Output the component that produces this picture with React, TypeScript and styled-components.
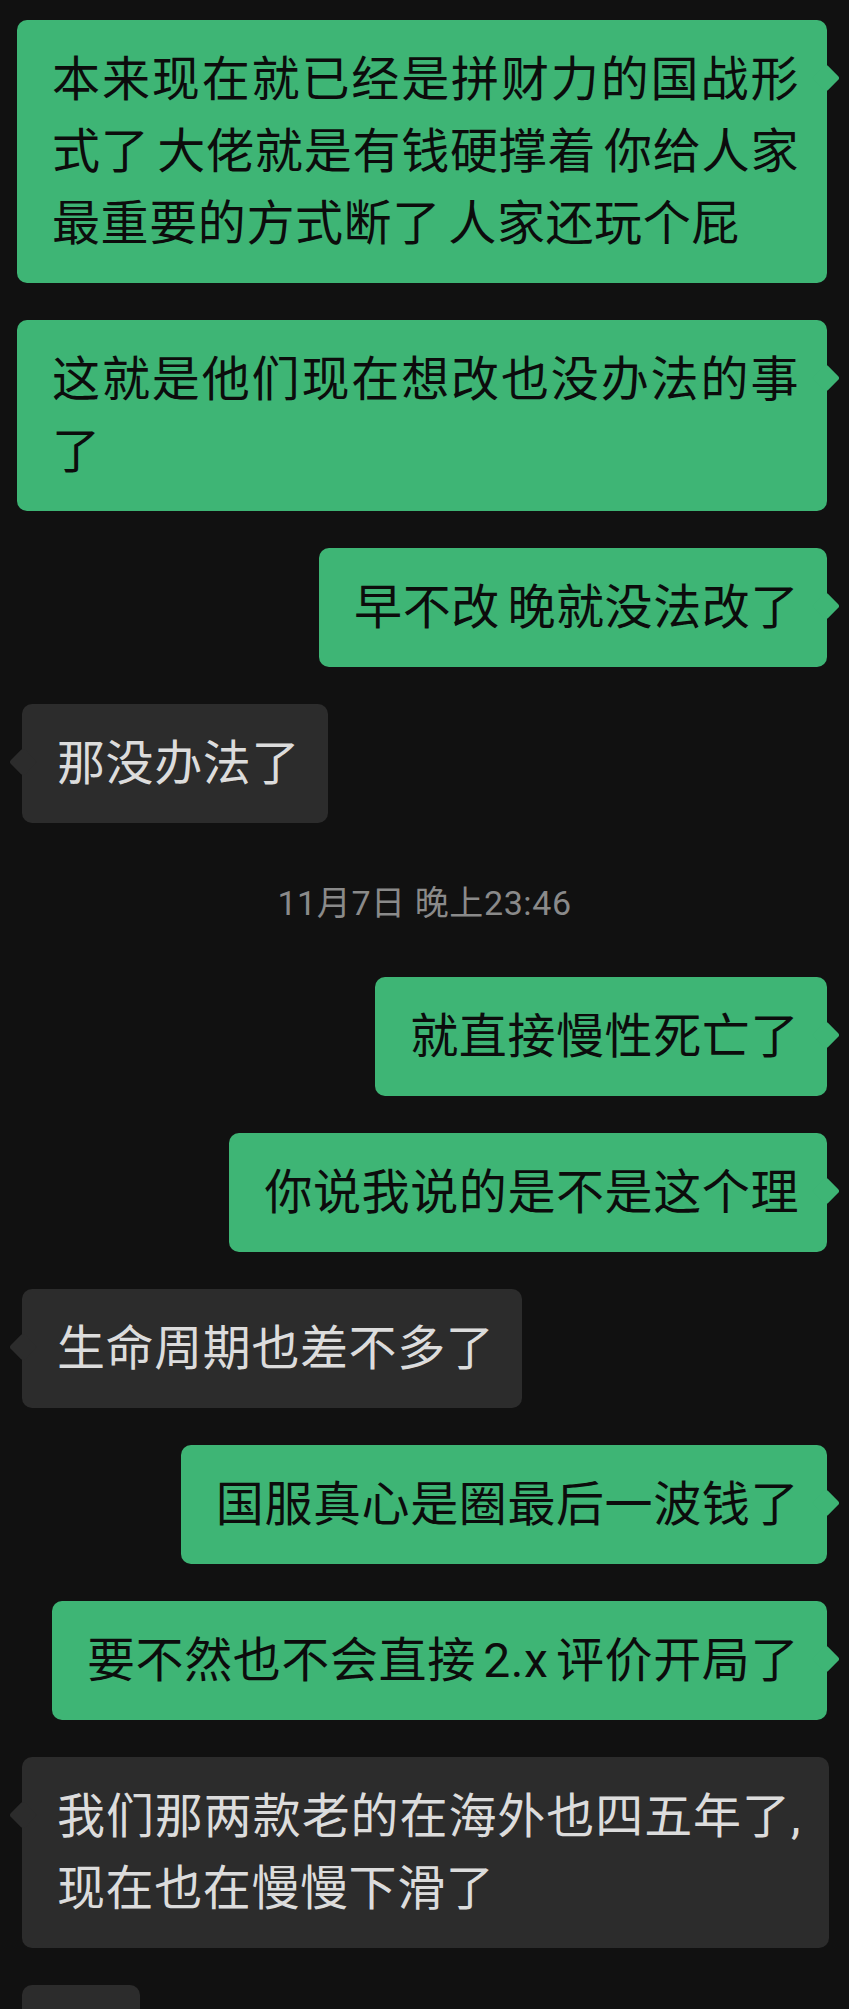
import styled, { createGlobalStyle } from 'styled-components';

type Item =
  | { kind: 'msg'; mine: boolean; text: string }
  | { kind: 'time'; text: string };

const items: Item[] = [
  { kind: 'msg', mine: true, text: '本来现在就已经是拼财力的国战形式了 大佬就是有钱硬撑着 你给人家最重要的方式断了 人家还玩个屁' },
  { kind: 'msg', mine: true, text: '这就是他们现在想改也没办法的事了' },
  { kind: 'msg', mine: true, text: '早不改 晚就没法改了' },
  { kind: 'msg', mine: false, text: '那没办法了' },
  { kind: 'time', text: '11月7日 晚上23:46' },
  { kind: 'msg', mine: true, text: '就直接慢性死亡了' },
  { kind: 'msg', mine: true, text: '你说我说的是不是这个理' },
  { kind: 'msg', mine: false, text: '生命周期也差不多了' },
  { kind: 'msg', mine: true, text: '国服真心是圈最后一波钱了' },
  { kind: 'msg', mine: true, text: '要不然也不会直接 2.x 评价开局了' },
  { kind: 'msg', mine: false, text: '我们那两款老的在海外也四五年了,现在也在慢慢下滑了' },
];

export default function App() {
  return (
    <>
      <GlobalStyle />
      <Chat>
        {items.map((item, i) =>
          item.kind === 'time' ? (
            <Stamp key={i}>{item.text}</Stamp>
          ) : (
            <Row key={i} $mine={item.mine}>
              <Bubble $mine={item.mine}>{item.text}</Bubble>
            </Row>
          )
        )}
        {/* next message, cut off by the bottom of the screen */}
        <Row $mine={false}>
          <Bubble $mine={false} $minWidth={118} aria-hidden>
            {'\u00a0'}
          </Bubble>
        </Row>
      </Chat>
    </>
  );
}

const GlobalStyle = createGlobalStyle`
  html, body {
    margin: 0;
    padding: 0;
    background: #111111;
    overflow: hidden;
  }
  body {
    font-family: Roboto, "Noto Sans CJK SC", sans-serif;
  }
`;

const Chat = styled.main`
  display: flex;
  flex-direction: column;
  gap: 37px;
  padding-top: 20px;
`;

const Row = styled.div<{ $mine: boolean }>`
  display: flex;
  justify-content: ${p => (p.$mine ? 'flex-end' : 'flex-start')};
  padding: ${p => (p.$mine ? '0 22px 0 17px' : '0 20px 0 22px')};
`;

const Bubble = styled.div<{ $mine: boolean; $minWidth?: number }>`
  position: relative;
  box-sizing: border-box;
  max-width: 100%;
  min-width: ${p => (p.$minWidth ? `${p.$minWidth}px` : '0')};
  padding: 24px 28px 23px 35px;
  border-radius: 10px;
  background: ${p => (p.$mine ? '#3eb575' : '#2c2c2c')};
  color: ${p => (p.$mine ? '#0c0c0c' : '#dcdcdc')};
  font-size: 48px;
  line-height: 72px;
  letter-spacing: 0.6px;
  word-spacing: -5px;
  text-align: justify;

  &::after {
    content: '';
    position: absolute;
    top: 48px;
    ${p => (p.$mine ? 'right: -9px;' : 'left: -9px;')}
    width: 20px;
    height: 20px;
    border-radius: 3px;
    background: ${p => (p.$mine ? '#3eb575' : '#2c2c2c')};
    transform: rotate(45deg);
  }
`;

const Stamp = styled.div`
  padding: 23px 0 17px;
  text-align: center;
  font-size: 34px;
  line-height: 40px;
  letter-spacing: 0.6px;
  color: #8a8a8a;
`;
